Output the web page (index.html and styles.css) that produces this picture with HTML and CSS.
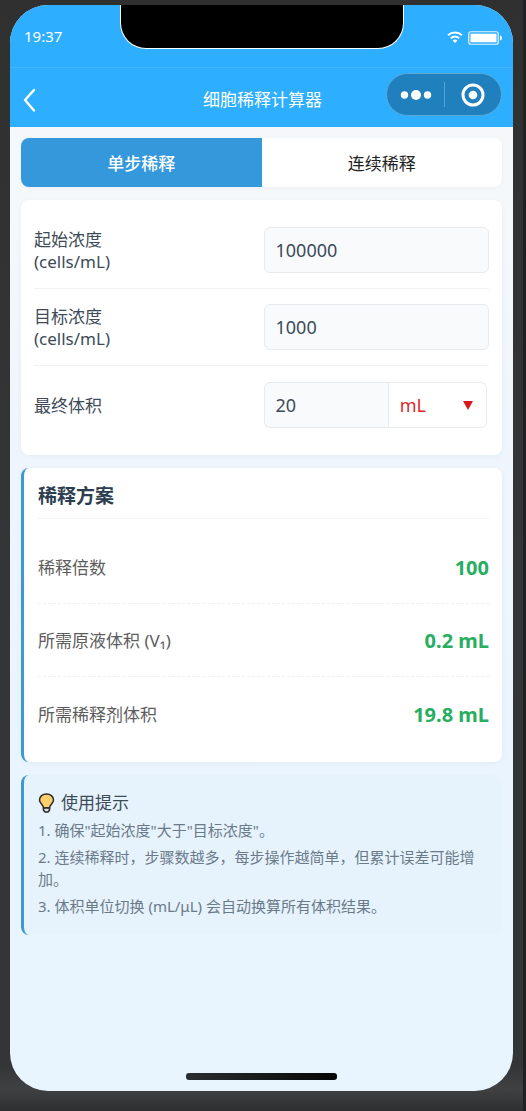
FILE: index.html
```html
<!DOCTYPE html>
<html lang="zh-CN">
<head>
<meta charset="utf-8">
<meta name="viewport" content="width=device-width, initial-scale=1">
<title>细胞稀释计算器</title>
<link rel="stylesheet" href="styles.css">
</head>
<body>
<div class="phone">
  <header class="header">
    <div class="status">
      <span class="time">19:37</span>
      <div class="notch"></div>
      <svg class="status-icons" width="56" height="16" viewBox="0 0 56 16" aria-hidden="true">
        <g fill="none" stroke="#fff" stroke-width="1.9">
          <path d="M1 5.2C5 1.6 11 1.6 15 5.2"/>
          <path d="M3.8 8.2C6.4 6 9.6 6 12.2 8.2"/>
        </g>
        <path d="M5.6 10.4C7 9.3 9 9.3 10.4 10.4L8 13Z" fill="#fff"/>
        <rect x="21.75" y="1.75" width="29.5" height="12.5" rx="2" fill="none" stroke="#e4f5ff" stroke-width="1.2"/>
        <rect x="23.5" y="3.7" width="26" height="8.6" fill="#fff"/>
        <path d="M53 5.5c2.6.4 2.6 4.600 0 5z" fill="#fff"/>
      </svg>
    </div>
    <nav class="navbar">
      <button class="back" type="button" aria-label="返回">
        <svg width="14" height="26" viewBox="0 0 14 26" aria-hidden="true"><path d="M11 3L2 13L11 23.500" fill="none" stroke="#fff" stroke-width="2.400" stroke-linecap="round" stroke-linejoin="round"/></svg>
      </button>
      <h1 class="title">细胞稀释计算器</h1>
      <div class="capsule">
        <button type="button" aria-label="更多">
          <svg width="32" height="12" viewBox="0 0 32 12" aria-hidden="true"><g fill="#fff"><circle cx="4.500" cy="6" r="3.700"/><circle cx="16" cy="6" r="5"/><circle cx="27.500" cy="6" r="3.700"/></g></svg>
        </button>
        <button type="button" aria-label="关闭">
          <svg width="24" height="24" viewBox="0 0 24 24" aria-hidden="true"><circle cx="12" cy="12" r="10" fill="none" stroke="#fff" stroke-width="3"/><circle cx="12" cy="12" r="4.300" fill="#fff"/></svg>
        </button>
      </div>
    </nav>
  </header>

  <main class="content">
    <div class="tabs">
      <button class="tab active" type="button">单步稀释</button>
      <button class="tab" type="button">连续稀释</button>
    </div>

    <form class="card form">
      <div class="field">
        <label for="start">起始浓度<br>(cells/mL)</label>
        <input id="start" class="box" type="text" value="100000">
      </div>
      <div class="field">
        <label for="target">目标浓度<br>(cells/mL)</label>
        <input id="target" class="box" type="text" value="1000">
      </div>
      <div class="field">
        <label for="volume">最终体积</label>
        <div class="group">
          <input id="volume" class="box joined" type="text" value="20">
          <div class="unit">
            <select class="box" aria-label="体积单位"><option>mL</option><option>μL</option></select>
            <svg class="arrow" width="10" height="9" viewBox="0 0 10 9" aria-hidden="true"><path d="M0 0H10L5 9Z" fill="#d9161a"/></svg>
          </div>
        </div>
      </div>
    </form>

    <section class="card result">
      <h2 class="result-title">稀释方案</h2>
      <div class="row"><span>稀释倍数</span><strong>100</strong></div>
      <div class="row"><span>所需原液体积 (V₁)</span><strong>0.2 mL</strong></div>
      <div class="row"><span>所需稀释剂体积</span><strong>19.8 mL</strong></div>
    </section>

    <section class="tips">
      <h2 class="tips-title">
        <svg width="17" height="20" viewBox="0 0 17 20" aria-hidden="true">
          <path d="M5.500 15C5.500 12 1.500 10.500 1.500 6.900C1.500 3.300 4.700 1 8.500 1S15.500 3.300 15.500 6.900C15.500 10.500 11.500 12 11.500 15Z" fill="#ffcf6b" stroke="#26292b" stroke-width="1.500"/>
          <path d="M5.500 15H11.500V17.300L10 19H7L5.500 17.300Z" fill="#d8dee2" stroke="#26292b" stroke-width="1.500" stroke-linejoin="round"/>
        </svg>
        使用提示
      </h2>
      <p>1. 确保"起始浓度"大于"目标浓度"。</p>
      <p>2. 连续稀释时，步骤数越多，每步操作越简单，但累计误差可能增加。</p>
      <p>3. 体积单位切换 (mL/μL) 会自动换算所有体积结果。</p>
    </section>
  </main>

  <div class="home"></div>
</div>
</body>
</html>
```
FILE: styles.css
```css
* {
  box-sizing: border-box;
}

body {
  margin: 0;
  min-height: 100vh;
  display: flex;
  padding: 5px 13px 20px 10px;
  background: linear-gradient(#303030, #333536 50%, #333536 96%, #404142 98%, #2e2f30);
  box-shadow: inset -3px 0 #202122;
  font-family: "Noto Sans", "Noto Sans CJK SC", sans-serif;
  font-size: 17px;
  line-height: 22px;
  color: #3d4b59;
}

button,
input,
select {
  margin: 0;
  padding: 0;
  border: 0;
  background: none;
  font: inherit;
  color: inherit;
}

.phone {
  flex: 1;
  display: flex;
  flex-direction: column;
  overflow: hidden;
  border-radius: 38px;
  background: linear-gradient(#f6f8fa, #f5f8fb 17%, #eff5fd 42%, #e9f4fe 75%, #e8f4fe);
}

.header {
  background: #2eaeff;
  color: #fff;
}

.status {
  display: grid;
  grid-template-columns: 1fr 284px 1fr;
  height: 63px;
  border-bottom: 1px solid #42b5fd;
}

.time {
  padding: 20px 0 0 14px;
  font-size: 15px;
}

.notch {
  height: 44px;
  border: 1px solid #fff;
  border-top: 0;
  border-radius: 0 0 26px 26px;
  background: #000;
}

.status-icons {
  justify-self: end;
  margin: 25px 10px 0 0;
}

.navbar {
  display: grid;
  grid-template-columns: 1fr auto 1fr;
  align-items: center;
  height: 59px;
  padding: 0 11px 0 13px;
}

.back {
  display: flex;
  justify-self: start;
  padding-top: 4px;
}

.title {
  margin: 0;
  padding-top: 5px;
  font-size: 17px;
  font-weight: 400;
}

.capsule {
  justify-self: end;
  display: grid;
  grid-template-columns: 1fr 1fr;
  width: 116px;
  height: 43px;
  margin-bottom: 6px;
  border: 1px solid #59a9da;
  border-radius: 22px;
  background: #2080bd;
}

.capsule button {
  display: flex;
  align-items: center;
  justify-content: center;
  margin: 8px 0;
}

.capsule button + button {
  border-left: 1px solid #5ba4d2;
}

.content {
  flex: 1;
  display: flex;
  flex-direction: column;
  gap: 13px;
  padding: 11px 11px 0;
}

.tabs {
  display: grid;
  grid-template-columns: 1fr 1fr;
  overflow: hidden;
  border-radius: 8px;
  background: #fff;
  box-shadow: 0 1px 4px rgba(0, 0, 0, 0.04);
}

.tab {
  height: 49px;
  padding-top: 3px;
  color: #222;
}

.tab.active {
  background: #3498db;
  color: #fff;
  font-weight: 500;
}

.card {
  border-radius: 8px;
  background: #fff;
  box-shadow: 0 1px 5px rgba(30, 80, 120, 0.06);
}

.form {
  padding: 12px 13px;
}

.field {
  display: grid;
  grid-template-columns: 1fr 1fr;
  column-gap: 4px;
  align-items: center;
  height: 77px;
  border-bottom: 1px solid #f1f2f4;
}

.field:last-child {
  border-bottom: 0;
}

.field label {
  padding-top: 2px;
}

.box {
  width: 100%;
  height: 46px;
  padding: 0 11px;
  border: 1px solid #e8ebee;
  border-radius: 6px;
  background: #f8fafc;
  font-size: 18px;
}

.group {
  display: grid;
  grid-template-columns: 5fr 4fr;
  padding-right: 2px;
}

.joined {
  border-right: 0;
  border-radius: 6px 0 0 6px;
}

.unit {
  position: relative;
}

.unit .box {
  display: block;
  appearance: none;
  border-radius: 0 6px 6px 0;
  background: #fff;
  color: #d9292b;
}

.arrow {
  position: absolute;
  top: 19px;
  right: 14px;
  pointer-events: none;
}

.result {
  padding: 14px 13px 12px 14px;
  border-left: 3px solid #3b9bd0;
}

.result-title {
  margin: 0 0 12px;
  padding-bottom: 7px;
  border-bottom: 1px solid #f1f2f4;
  font-size: 19px;
  line-height: 29px;
  color: #2c3e50;
}

.row {
  display: flex;
  align-items: center;
  justify-content: space-between;
  height: 73px;
  padding-top: 2px;
  border-bottom: 1px dashed #eceeef;
  color: #5c5c5c;
}

.row:last-child {
  border-bottom: 0;
}

.row strong {
  font-size: 20px;
  color: #27ae60;
}

.tips {
  padding: 13px 13px 13px 14px;
  border-left: 3px solid #3b9bd0;
  border-radius: 8px;
  background: #e6f3fd;
  font-size: 15px;
  color: #6b7a89;
}

.tips-title {
  display: flex;
  align-items: center;
  gap: 6px;
  margin: 0 0 2px;
  font-size: 17px;
  font-weight: 400;
  line-height: 29px;
  color: #3d4b59;
}

.tips p {
  margin: 0 0 5px;
}

.home {
  align-self: center;
  width: 30%;
  height: 7px;
  margin-bottom: 11px;
  border-radius: 3px;
  background: linear-gradient(to right, #2a2e30, #050606);
}
```
